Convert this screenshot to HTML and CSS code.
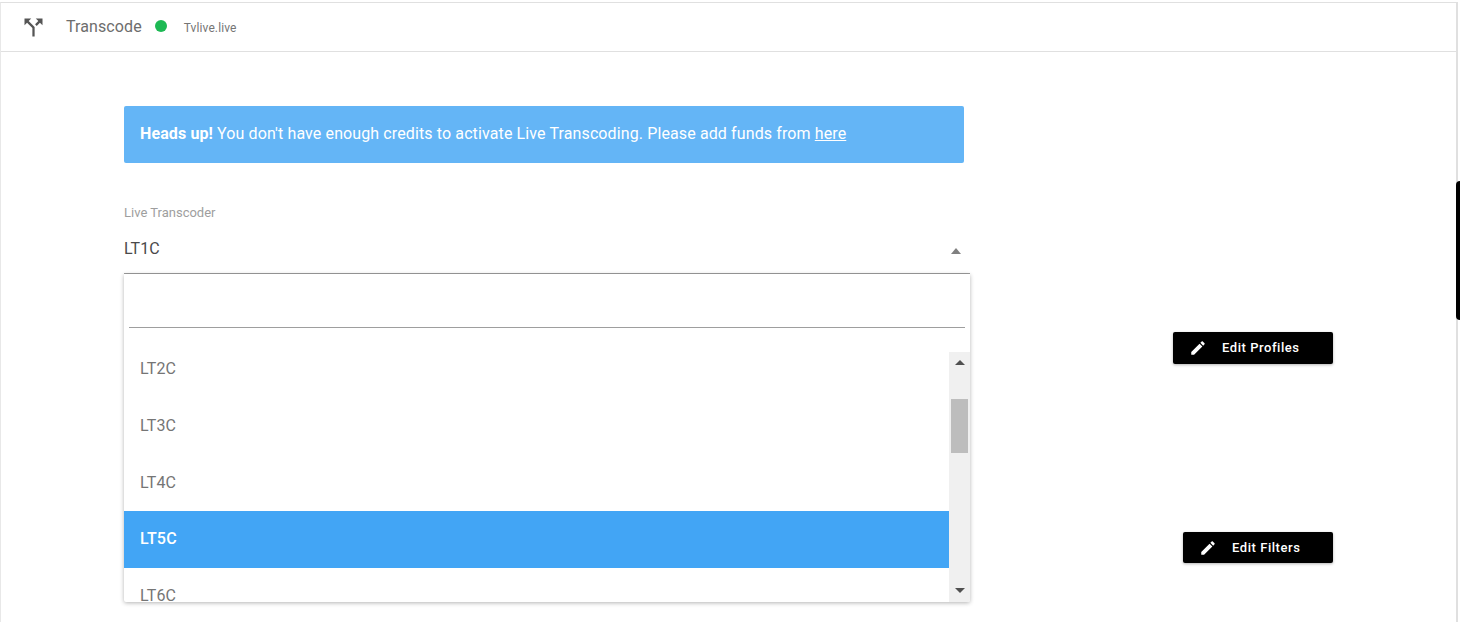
FILE: index.html
```html
<!DOCTYPE html>
<html lang="en">
<head>
<meta charset="utf-8">
<title>Transcode</title>
<link rel="stylesheet" href="styles.css">
</head>
<body>
<div class="card">
  <header class="head">
    <svg class="head-icon" viewBox="0 0 24 24"><path d="M14 4l2.29 2.29-2.88 2.88 1.42 1.42 2.88-2.88L20 10V4zm-4 0H4v6l2.29-2.29 4.71 4.7V20h2v-8.41l-5.29-5.3z"/></svg>
    <span class="head-title">Transcode</span>
    <span class="dot"></span>
    <span class="head-sub">Tvlive.live</span>
  </header>
  <main class="main">
    <div class="form">
      <div class="alert"><strong>Heads up!</strong> You don't have enough credits to activate Live Transcoding. Please add funds from <a href="#">here</a></div>
      <div class="select">
        <label class="select-label">Live Transcoder</label>
        <div class="select-value"><span>LT1C</span><span class="caret"></span></div>
        <div class="menu">
          <div class="menu-search"><div class="search-input"></div></div>
          <div class="menu-body">
            <ul class="options">
              <li>LT2C</li>
              <li>LT3C</li>
              <li>LT4C</li>
              <li class="selected">LT5C</li>
              <li>LT6C</li>
            </ul>
            <div class="scrollbar">
              <span class="arrow up"></span>
              <span class="thumb"></span>
              <span class="arrow down"></span>
            </div>
          </div>
        </div>
      </div>
    </div>
    <div class="row row-profiles">
      <button class="btn btn-profiles" type="button">
        <svg class="btn-icon" viewBox="0 0 24 24"><path d="M3 17.25V21h3.75L17.81 9.94l-3.75-3.75L3 17.25zM20.71 7.04c.39-.39.39-1.02 0-1.41l-2.34-2.34c-.39-.39-1.02-.39-1.41 0l-1.83 1.83 3.75 3.75 1.83-1.83z"/></svg>
        <span class="btn-text">Edit Profiles</span>
      </button>
    </div>
    <div class="row row-filters">
      <button class="btn btn-filters" type="button">
        <svg class="btn-icon" viewBox="0 0 24 24"><path d="M3 17.25V21h3.75L17.81 9.94l-3.75-3.75L3 17.25zM20.71 7.04c.39-.39.39-1.02 0-1.41l-2.34-2.34c-.39-.39-1.02-.39-1.41 0l-1.83 1.83 3.75 3.75 1.83-1.83z"/></svg>
        <span class="btn-text">Edit Filters</span>
      </button>
    </div>
  </main>
</div>
<div class="side-tab"></div>
</body>
</html>
```

FILE: styles.css
```css
* { box-sizing: border-box; }
html, body { margin: 0; height: 100%; }
body {
  background: #fff;
  font-family: Roboto, "Liberation Sans", sans-serif;
  overflow: hidden;
  padding-top: 2px;
}
.card {
  width: 1458px;
  height: 620px;
  border-top: 1px solid #e0e0e0;
  border-left: 1px solid #e8e8e8;
  border-right: 2px solid #e0e0e0;
}
.head {
  height: 49px;
  display: flex;
  align-items: center;
  border-bottom: 1px solid #e0e0e0;
  padding-left: 19px;
}
.head-icon { width: 27px; height: 27px; fill: #555; }
.head-title { margin: -2px 0 0 19px; font-size: 16px; letter-spacing: .1px; color: #6d6d6d; }
.dot { width: 12px; height: 12px; border-radius: 50%; background: #1db954; margin: -2px 0 0 13px; }
.head-sub { margin: 2px 0 0 17px; font-size: 12px; letter-spacing: .1px; color: #757575; }
.main { padding: 54px 123px 0 123px; }
.form { width: 846px; }
.alert {
  width: 840px;
  height: 57px;
  background: #64b5f6;
  color: #fff;
  border-radius: 2px;
  padding: 0 16px;
  font-size: 16px;
  letter-spacing: .115px;
  line-height: 55px;
}
.alert a { color: #fff; text-decoration: underline; }
.select { position: relative; margin-top: 42px; height: 69px; border-bottom: 1px solid #9e9e9e; }
.select-label { display: block; font-size: 13px; line-height: 16px; color: #9e9e9e; }
.select-value {
  display: flex;
  justify-content: space-between;
  align-items: center;
  margin-top: 15px;
  height: 24px;
  font-size: 16px;
  letter-spacing: .1px;
  color: #4a4a4a;
}
.caret {
  width: 0; height: 0;
  margin: 6px 9px 0 0;
  border-left: 5px solid transparent;
  border-right: 5px solid transparent;
  border-bottom: 6px solid #808080;
}
.menu {
  position: absolute;
  left: 0; top: 69px;
  width: 846px;
  height: 328px;
  background: #fff;
  border-radius: 0 0 2px 2px;
  box-shadow: 0 1px 4px rgba(0,0,0,.3);
  display: flex;
  flex-direction: column;
  overflow: hidden;
  z-index: 2;
}
.menu-search { height: 78px; padding: 0 5px; flex: none; }
.search-input { height: 54px; border-bottom: 1px solid #9e9e9e; }
.menu-body { flex: 1; display: flex; min-height: 0; }
.options { flex: 1; list-style: none; margin: -12px 0 0; padding: 0; }
.options li {
  height: 57px;
  line-height: 57px;
  padding-left: 16px;
  font-size: 16px;
  letter-spacing: .2px;
  color: #757575;
}
.options .selected { background: #42a5f5; color: #fff; font-weight: 500; }
.options .selected, .options .selected ~ li { line-height: 55px; }
.scrollbar {
  width: 21px;
  flex: none;
  position: relative;
  background: #f0f0f0;
}
.thumb { position: absolute; left: 2px; top: 47px; width: 17px; height: 54px; background: #bdbdbd; }
.arrow { position: absolute; left: 6px; width: 0; height: 0; border-left: 5px solid transparent; border-right: 5px solid transparent; }
.arrow.up { top: 8px; border-bottom: 5px solid #505050; }
.arrow.down { bottom: 9px; border-top: 5px solid #505050; }
.row { display: flex; justify-content: flex-end; }
.row-profiles { margin-top: 58px; }
.row-filters { margin-top: 168px; }
.btn {
  display: flex;
  align-items: center;
  background: #000;
  color: #fff;
  border: 0;
  border-radius: 2px;
  font-family: inherit;
  font-size: 13px;
  font-weight: 500;
  letter-spacing: .55px;
  box-shadow: 0 1px 3px rgba(0,0,0,.3);
  padding: 0 0 0 16px;
}
.btn-profiles { width: 160px; height: 32px; }
.btn-profiles .btn-text { margin-top: -2px; }
.btn-filters { width: 150px; height: 31px; }
.btn-icon { width: 18px; height: 18px; fill: #fff; margin-right: 15px; flex: none; }
.side-tab {
  position: absolute;
  right: 0; top: 181px;
  width: 4px; height: 139px;
  background: #000;
  border-radius: 8px 0 0 8px;
}
```
